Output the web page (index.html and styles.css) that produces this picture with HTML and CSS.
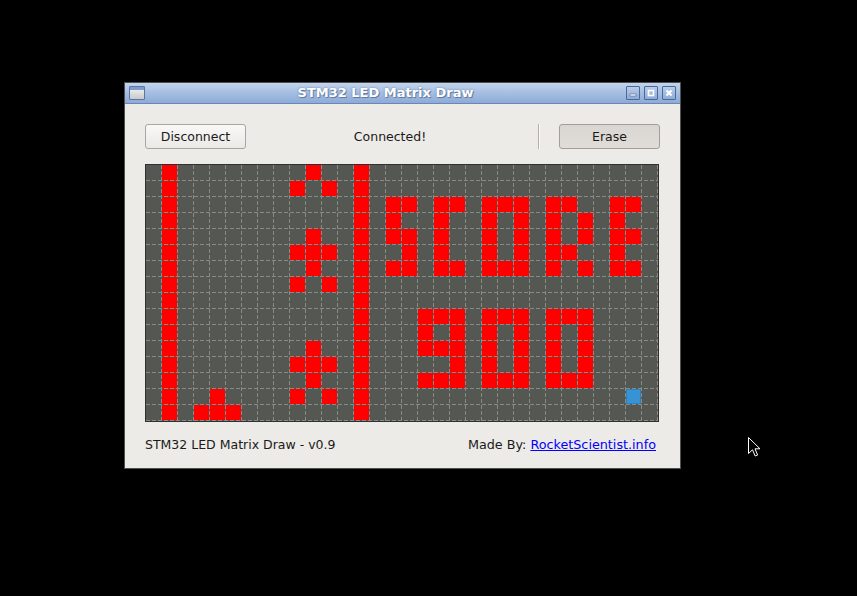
FILE: index.html
```html
<!DOCTYPE html>
<html>
<head>
<meta charset="utf-8">
<title>STM32 LED Matrix Draw</title>
<link rel="stylesheet" href="styles.css">
</head>
<body>
<div class="desktop">
  <div class="window">
    <div class="titlebar">
      <div class="appicon"><div class="appicon-bar"></div></div>
      <div class="title">STM32 LED Matrix Draw</div>
      <div class="wbtns">
        <span class="wbtn"><svg width="12" height="12" viewBox="0 0 12 12"><rect x="3" y="7" width="6" height="2" fill="#fff" stroke="#4a6797" stroke-width="0.6"/></svg></span>
        <span class="wbtn"><svg width="12" height="12" viewBox="0 0 12 12"><rect x="3.5" y="3.5" width="5" height="5" fill="none" stroke="#fff" stroke-width="1.6"/></svg></span>
        <span class="wbtn"><svg width="12" height="12" viewBox="0 0 12 12"><path d="M3.5 3.5 L8.5 8.5 M8.5 3.5 L3.5 8.5" stroke="#fff" stroke-width="2"/></svg></span>
      </div>
    </div>
    <div class="content">
      <div class="toolbar">
        <button class="btn">Disconnect</button>
        <span class="status">Connected!</span>
        <span class="sep"></span>
        <button class="btn pressed">Erase</button>
      </div>
      <div class="matrix">
        <div class="row"><i></i><i class="on"></i><i></i><i></i><i></i><i></i><i></i><i></i><i></i><i></i><i class="on"></i><i></i><i></i><i class="on"></i><i></i><i></i><i></i><i></i><i></i><i></i><i></i><i></i><i></i><i></i><i></i><i></i><i></i><i></i><i></i><i></i><i></i><i></i></div>
        <div class="row"><i></i><i class="on"></i><i></i><i></i><i></i><i></i><i></i><i></i><i></i><i class="on"></i><i></i><i class="on"></i><i></i><i class="on"></i><i></i><i></i><i></i><i></i><i></i><i></i><i></i><i></i><i></i><i></i><i></i><i></i><i></i><i></i><i></i><i></i><i></i><i></i></div>
        <div class="row"><i></i><i class="on"></i><i></i><i></i><i></i><i></i><i></i><i></i><i></i><i></i><i></i><i></i><i></i><i class="on"></i><i></i><i class="on"></i><i class="on"></i><i></i><i class="on"></i><i class="on"></i><i></i><i class="on"></i><i class="on"></i><i class="on"></i><i></i><i class="on"></i><i class="on"></i><i></i><i></i><i class="on"></i><i class="on"></i><i></i></div>
        <div class="row"><i></i><i class="on"></i><i></i><i></i><i></i><i></i><i></i><i></i><i></i><i></i><i></i><i></i><i></i><i class="on"></i><i></i><i class="on"></i><i></i><i></i><i class="on"></i><i></i><i></i><i class="on"></i><i></i><i class="on"></i><i></i><i class="on"></i><i></i><i class="on"></i><i></i><i class="on"></i><i></i><i></i></div>
        <div class="row"><i></i><i class="on"></i><i></i><i></i><i></i><i></i><i></i><i></i><i></i><i></i><i class="on"></i><i></i><i></i><i class="on"></i><i></i><i class="on"></i><i class="on"></i><i></i><i class="on"></i><i></i><i></i><i class="on"></i><i></i><i class="on"></i><i></i><i class="on"></i><i></i><i class="on"></i><i></i><i class="on"></i><i class="on"></i><i></i></div>
        <div class="row"><i></i><i class="on"></i><i></i><i></i><i></i><i></i><i></i><i></i><i></i><i class="on"></i><i class="on"></i><i class="on"></i><i></i><i class="on"></i><i></i><i></i><i class="on"></i><i></i><i class="on"></i><i></i><i></i><i class="on"></i><i></i><i class="on"></i><i></i><i class="on"></i><i class="on"></i><i></i><i></i><i class="on"></i><i></i><i></i></div>
        <div class="row"><i></i><i class="on"></i><i></i><i></i><i></i><i></i><i></i><i></i><i></i><i></i><i class="on"></i><i></i><i></i><i class="on"></i><i></i><i class="on"></i><i class="on"></i><i></i><i class="on"></i><i class="on"></i><i></i><i class="on"></i><i class="on"></i><i class="on"></i><i></i><i class="on"></i><i></i><i class="on"></i><i></i><i class="on"></i><i class="on"></i><i></i></div>
        <div class="row"><i></i><i class="on"></i><i></i><i></i><i></i><i></i><i></i><i></i><i></i><i class="on"></i><i></i><i class="on"></i><i></i><i class="on"></i><i></i><i></i><i></i><i></i><i></i><i></i><i></i><i></i><i></i><i></i><i></i><i></i><i></i><i></i><i></i><i></i><i></i><i></i></div>
        <div class="row"><i></i><i class="on"></i><i></i><i></i><i></i><i></i><i></i><i></i><i></i><i></i><i></i><i></i><i></i><i class="on"></i><i></i><i></i><i></i><i></i><i></i><i></i><i></i><i></i><i></i><i></i><i></i><i></i><i></i><i></i><i></i><i></i><i></i><i></i></div>
        <div class="row"><i></i><i class="on"></i><i></i><i></i><i></i><i></i><i></i><i></i><i></i><i></i><i></i><i></i><i></i><i class="on"></i><i></i><i></i><i></i><i class="on"></i><i class="on"></i><i class="on"></i><i></i><i class="on"></i><i class="on"></i><i class="on"></i><i></i><i class="on"></i><i class="on"></i><i class="on"></i><i></i><i></i><i></i><i></i></div>
        <div class="row"><i></i><i class="on"></i><i></i><i></i><i></i><i></i><i></i><i></i><i></i><i></i><i></i><i></i><i></i><i class="on"></i><i></i><i></i><i></i><i class="on"></i><i></i><i class="on"></i><i></i><i class="on"></i><i></i><i class="on"></i><i></i><i class="on"></i><i></i><i class="on"></i><i></i><i></i><i></i><i></i></div>
        <div class="row"><i></i><i class="on"></i><i></i><i></i><i></i><i></i><i></i><i></i><i></i><i></i><i class="on"></i><i></i><i></i><i class="on"></i><i></i><i></i><i></i><i class="on"></i><i class="on"></i><i class="on"></i><i></i><i class="on"></i><i></i><i class="on"></i><i></i><i class="on"></i><i></i><i class="on"></i><i></i><i></i><i></i><i></i></div>
        <div class="row"><i></i><i class="on"></i><i></i><i></i><i></i><i></i><i></i><i></i><i></i><i class="on"></i><i class="on"></i><i class="on"></i><i></i><i class="on"></i><i></i><i></i><i></i><i></i><i></i><i class="on"></i><i></i><i class="on"></i><i></i><i class="on"></i><i></i><i class="on"></i><i></i><i class="on"></i><i></i><i></i><i></i><i></i></div>
        <div class="row"><i></i><i class="on"></i><i></i><i></i><i></i><i></i><i></i><i></i><i></i><i></i><i class="on"></i><i></i><i></i><i class="on"></i><i></i><i></i><i></i><i class="on"></i><i class="on"></i><i class="on"></i><i></i><i class="on"></i><i class="on"></i><i class="on"></i><i></i><i class="on"></i><i class="on"></i><i class="on"></i><i></i><i></i><i></i><i></i></div>
        <div class="row"><i></i><i class="on"></i><i></i><i></i><i class="on"></i><i></i><i></i><i></i><i></i><i class="on"></i><i></i><i class="on"></i><i></i><i class="on"></i><i></i><i></i><i></i><i></i><i></i><i></i><i></i><i></i><i></i><i></i><i></i><i></i><i></i><i></i><i></i><i></i><i class="sel"></i><i></i></div>
        <div class="row"><i></i><i class="on"></i><i></i><i class="on"></i><i class="on"></i><i class="on"></i><i></i><i></i><i></i><i></i><i></i><i></i><i></i><i class="on"></i><i></i><i></i><i></i><i></i><i></i><i></i><i></i><i></i><i></i><i></i><i></i><i></i><i></i><i></i><i></i><i></i><i></i><i></i></div>
      </div>
      <div class="footer">
        <span>STM32 LED Matrix Draw - v0.9</span>
        <span class="credit">Made By: <a class="link" href="#">RocketScientist.info</a></span>
      </div>
    </div>
  </div>
  <svg class="cursor" width="13" height="21" viewBox="0 0 13 21"><path d="M0.5 0.5 L0.5 16.5 L4.5 12.8 L7.2 19 L9.6 18 L7 11.8 L12 11.8 Z" fill="#000" stroke="#fff" stroke-width="1"/></svg>
</div>
</body>
</html>
```

FILE: styles.css
```css
* { box-sizing: border-box; }
html, body { margin: 0; padding: 0; background: #000; }
body {
  width: 857px;
  height: 596px;
  overflow: hidden;
  font-family: "DejaVu Sans", sans-serif;
  font-size: 12.5px;
  color: #1a1a1a;
}
.desktop {
  position: relative;
  width: 857px;
  height: 596px;
  padding: 82px 0 0 124px;
}
.window {
  width: 557px;
  height: 387px;
  border: 1px solid #505050;
  background: #edebe7;
  display: flex;
  flex-direction: column;
}
.titlebar {
  flex: none;
  height: 21px;
  display: flex;
  align-items: center;
  padding: 0 4px;
  background: linear-gradient(#c3d5ed, #a7c0e3 45%, #8dabd7);
  border-bottom: 1px solid #6a87b6;
}
.appicon {
  width: 16px;
  height: 14px;
  border: 1px solid #5a76a4;
  border-radius: 1px;
  background: linear-gradient(#f4f4f4, #c9c9c9);
  overflow: hidden;
}
.appicon-bar {
  height: 3px;
  background: #7d9bcb;
}
.title {
  flex: 1;
  text-align: center;
  color: #fff;
  font-weight: bold;
  font-size: 13px;
  line-height: 16px;
  text-shadow: 0 0 2px rgba(40, 60, 100, 0.55), 1px 1px 0 rgba(50, 70, 110, 0.45);
}
.wbtns {
  display: flex;
  gap: 4px;
}
.wbtn {
  width: 14px;
  height: 14px;
  border: 1px solid #4b6898;
  border-radius: 1px;
  background: linear-gradient(#b9cdea, #8fabd7);
  display: flex;
  align-items: center;
  justify-content: center;
}
.wbtn svg { display: block; }
.content {
  flex: 1;
  padding: 20px 20px 0 20px;
}
.toolbar {
  display: flex;
  align-items: center;
  height: 25px;
}
.btn {
  width: 101px;
  height: 25px;
  padding: 0;
  border: 1px solid #a9a5a0;
  border-radius: 3px;
  background: linear-gradient(#f9f8f7, #ebe9e6);
  font-family: "DejaVu Sans", sans-serif;
  font-size: 12.5px;
  color: #1a1a1a;
}
.btn.pressed {
  background: linear-gradient(#dad6d2, #e0ddd9);
  border-color: #a29e99;
}
.status {
  flex: 1;
  text-align: center;
  padding-right: 4px;
}
.sep {
  width: 2px;
  height: 25px;
  border-left: 1px solid #b3b0ab;
  border-right: 1px solid #fbfaf9;
  margin-right: 19px;
}
.matrix {
  position: relative;
  margin-top: 15px;
  width: 514px;
  height: 258px;
  border: 1px solid #303030;
  background: #555753;
}
.matrix::after {
  content: "";
  position: absolute;
  inset: 0;
  pointer-events: none;
  background-image:
    conic-gradient(at 15px 4px, #8a8a85 0deg 90deg, transparent 90deg),
    conic-gradient(at 4px 15px, transparent 0deg 180deg, #8a8a85 180deg 270deg, transparent 270deg);
  background-size: 16px 6px, 6px 16px;
}
.row {
  display: flex;
  height: 16px;
}
.row i {
  display: block;
  flex: none;
  width: 16px;
  height: 16px;
}
.row i.on {
  background: linear-gradient(#ff0000, #ff0000) 0 0 / 15px 15px no-repeat;
}
.row i.sel {
  background:
    linear-gradient(#3893d5, #3893d5) 1px 1px / 13px 13px no-repeat,
    linear-gradient(#2c80c0, #2c80c0) 0 0 / 15px 15px no-repeat;
}
.footer {
  margin-top: 15px;
  width: 511px;
  display: flex;
  justify-content: space-between;
  line-height: 16px;
}
.credit {
  font-size: 12.75px;
}
.link {
  color: #0000ff;
  text-decoration: underline;
}
.cursor {
  position: absolute;
  left: 748px;
  top: 437px;
}
```
